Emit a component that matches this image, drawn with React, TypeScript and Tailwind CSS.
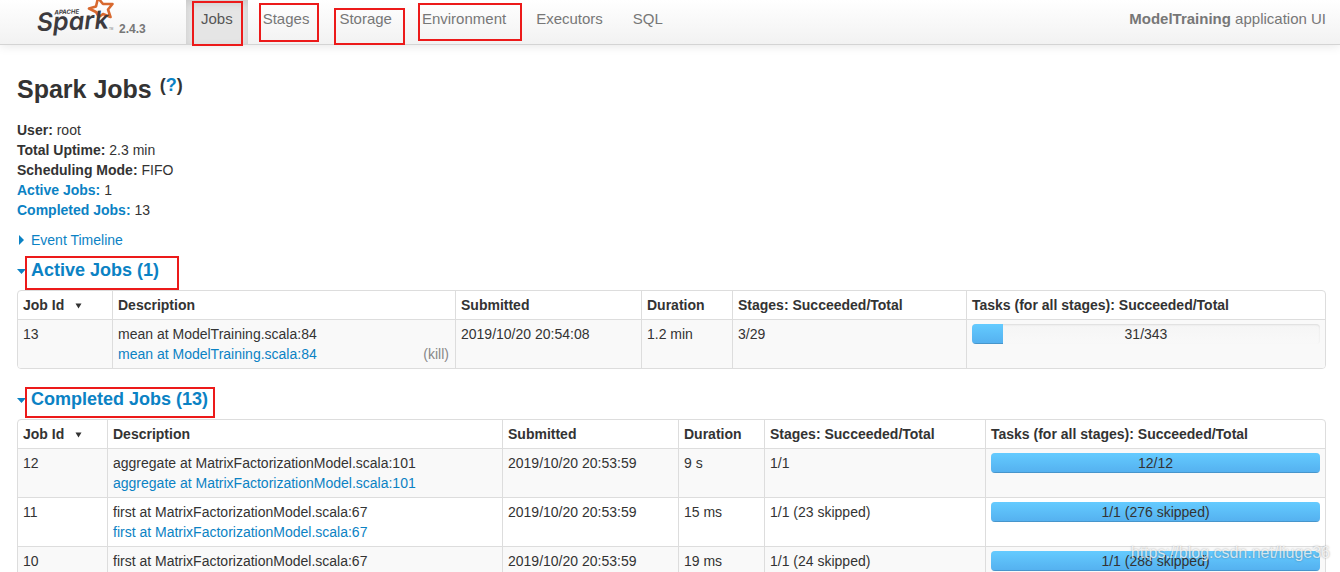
import React from "react";

type Job = {
  id: number;
  name: string;
  submitted: string;
  duration: string;
  stages: string;
  done: number;
  total: number;
  skipped?: number;
  running?: boolean;
};

const activeJobs: Job[] = [
  { id: 13, name: "mean at ModelTraining.scala:84", submitted: "2019/10/20 20:54:08", duration: "1.2 min", stages: "3/29", done: 31, total: 343, running: true },
];

const completedJobs: Job[] = [
  { id: 12, name: "aggregate at MatrixFactorizationModel.scala:101", submitted: "2019/10/20 20:53:59", duration: "9 s", stages: "1/1", done: 12, total: 12 },
  { id: 11, name: "first at MatrixFactorizationModel.scala:67", submitted: "2019/10/20 20:53:59", duration: "15 ms", stages: "1/1 (23 skipped)", done: 1, total: 1, skipped: 276 },
  { id: 10, name: "first at MatrixFactorizationModel.scala:67", submitted: "2019/10/20 20:53:59", duration: "19 ms", stages: "1/1 (24 skipped)", done: 1, total: 1, skipped: 288 },
];

// mark = red frame drawn over the tab
const tabs = [
  { name: "Jobs", active: true, mark: "left-[6px] top-px h-[45px] w-[51px]" },
  { name: "Stages", mark: "left-[11px] top-[3px] h-[39px] w-[60px]" },
  { name: "Storage", mark: "left-[10px] top-[8px] h-[37px] w-[71px]" },
  { name: "Environment", mark: "left-[11px] top-[3px] h-[38px] w-[104px]" },
  { name: "Executors" },
  { name: "SQL" },
];

const headers = ["Job Id", "Description", "Submitted", "Duration", "Stages: Succeeded/Total", "Tasks (for all stages): Succeeded/Total"];

const SparkLogo: React.FC = () => (
  <svg width="80" height="36" viewBox="0 0 80 36" aria-label="Apache Spark" className="block">
    <polygon
      points="53,8.500 60,6.500 62,-2 67,4 76.500,4 72,9.500 74.500,17 67,14 63,17 60,12"
      fill="none"
      stroke="#d8692f"
      strokeWidth="2.600"
      strokeLinejoin="round"
    />
    <g transform="rotate(-2 1 30)" fill="#3c3a3e" className="font-[Inter,sans-serif] italic">
      <text x="1" y="31" fontSize="25" fontWeight="600">Spark</text>
      <text x="19" y="15" fontSize="6" fontWeight="700">APACHE</text>
    </g>
    <text x="73" y="30" fontSize="3" fill="#777">TM</text>
  </svg>
);

type SectionTitleProps = {
  title: string;
  mark: string;
};

const SectionTitle: React.FC<SectionTitleProps> = ({ title, mark }) => (
  <h4 className="relative h-5 text-[18px] leading-5 font-bold text-[#0b82c4]">
    <a href="#" className="flex items-center gap-[5px]">
      <svg width="9" height="5" viewBox="0 0 9 5" className="mt-[3px]">
        <path d="M0 0h9L4.500 5z" fill="currentColor" />
      </svg>
      {title}
    </a>
    <span className={"pointer-events-none absolute border-2 border-[#ec1a1a] " + mark} />
  </h4>
);

const TaskProgress: React.FC<{ job: Job }> = ({ job }) => (
  <div className="relative h-5 overflow-hidden rounded-sm bg-linear-to-b from-[#f5f5f5] to-[#f9f9f9] text-center shadow-[inset_0_1px_2px_rgba(0,0,0,0.1)]">
    <div
      className="h-5 bg-linear-to-b from-[#64cbff] to-[#54b0ef] shadow-[inset_0_-1px_0_rgba(0,0,0,0.15)]"
      style={{ width: `${(job.done / job.total) * 100}%` }}
    />
    <span className="absolute inset-0">
      {job.done}/{job.total}
      {job.skipped ? ` (${job.skipped} skipped)` : ""}
    </span>
  </div>
);

type JobTableProps = {
  jobs: Job[];
  cols: string[];
};

const JobTable: React.FC<JobTableProps> = ({ jobs, cols }) => {
  const cell = "border-[#dddddd] px-[5px] py-1 not-first:border-l";

  return (
    <div className="overflow-hidden rounded border border-[#dddddd]">
      <table className="w-full table-fixed border-separate border-spacing-0 text-left">
        <colgroup>
          {cols.map((c, i) => (
            <col key={i} className={c} />
          ))}
        </colgroup>
        <thead>
          <tr>
            {headers.map((h, i) => (
              <th key={h} scope="col" className={cell + " font-bold whitespace-nowrap"}>
                {h}
                {i === 0 && (
                  <svg width="7" height="6" viewBox="0 0 7 6" className="ml-[11px] inline-block align-[1px]">
                    <path d="M0.500 0.500h6L3.500 5.500z" fill="#333" />
                  </svg>
                )}
              </th>
            ))}
          </tr>
        </thead>
        <tbody>
          {jobs.map((job) => (
            <tr key={job.id} className="align-top odd:bg-[#f9f9f9]">
              <td className={cell + " border-t"}>{job.id}</td>
              <td className={cell + " border-t"}>
                <div>{job.name}</div>
                <div className="flex justify-between">
                  <a href="#" className="text-[#0b82c4]">{job.name}</a>
                  {job.running && <a href="#" className="pr-px text-[#888888]">(kill)</a>}
                </div>
              </td>
              <td className={cell + " border-t"}>{job.submitted}</td>
              <td className={cell + " border-t"}>{job.duration}</td>
              <td className={cell + " border-t"}>{job.stages}</td>
              <td className={cell + " border-t"}>
                <TaskProgress job={job} />
              </td>
            </tr>
          ))}
        </tbody>
      </table>
    </div>
  );
};

const App: React.FC = () => {
  return (
    <div className="relative h-screen overflow-hidden bg-white font-['Liberation_Sans',Arial,sans-serif] text-sm leading-5 text-[#333333]">
      <nav className="flex h-[45px] border-b border-[#d4d4d4] bg-linear-to-b from-white to-[#f2f2f2] pr-[14px] pl-9 text-[15px] text-[#777777] shadow-[0_1px_10px_rgba(0,0,0,0.1)]">
        <a href="#" className="flex w-[150px] items-start gap-[3px]">
          <SparkLogo />
          <span className="pt-[19px] text-xs leading-5 font-bold">2.4.3</span>
        </a>
        <ul className="flex">
          {tabs.map((tab) => (
            <li key={tab.name} className="relative">
              <a
                href="#"
                className={
                  "block h-11 px-[15px] pt-[9px] " +
                  (tab.active ? "bg-[#e5e5e5] text-[#555555] shadow-[inset_0_3px_8px_rgba(0,0,0,0.125)]" : "")
                }
              >
                {tab.name}
              </a>
              {tab.mark && <span className={"pointer-events-none absolute border-2 border-[#ec1a1a] " + tab.mark} />}
            </li>
          ))}
        </ul>
        <p className="ml-auto pt-[9px]">
          <strong>ModelTraining</strong> application UI
        </p>
      </nav>

      <main className="pt-6 pr-[14px] pl-[17px]">
        <h3 className="flex h-10 gap-2 text-[25px] leading-10 font-bold">
          Spark Jobs
          <sup className="top-0 text-[18px] leading-8">
            (<a href="#" className="text-[#0b82c4]">?</a>)
          </sup>
        </h3>

        <ul className="mt-[11px]">
          <li><strong>User:</strong> root</li>
          <li><strong>Total Uptime:</strong> 2.3 min</li>
          <li><strong>Scheduling Mode:</strong> FIFO</li>
          <li><a href="#" className="font-bold text-[#0b82c4]">Active Jobs:</a> 1</li>
          <li><a href="#" className="font-bold text-[#0b82c4]">Completed Jobs:</a> 13</li>
        </ul>

        <a href="#" className="mt-[10px] mb-[10px] flex items-center gap-[7px] pl-[2px] text-[#0b82c4]">
          <svg width="5" height="10" viewBox="0 0 5 10">
            <path d="M0 0v10l5-5z" fill="currentColor" />
          </svg>
          Event Timeline
        </a>

        <SectionTitle title="Active Jobs (1)" mark="left-[8px] top-[-4px] h-[34px] w-[154px]" />
        <div className="mt-[10px] mb-5">
          <JobTable jobs={activeJobs} cols={["w-[94px]", "w-[343px]", "w-[186px]", "w-[91px]", "w-[234px]", ""]} />
        </div>

        <SectionTitle title="Completed Jobs (13)" mark="left-[8px] top-[-2px] h-[31px] w-[190px]" />
        <div className="mt-[10px]">
          <JobTable jobs={completedJobs} cols={["w-[89px]", "w-[395px]", "w-[176px]", "w-[86px]", "w-[221px]", ""]} />
        </div>
      </main>

      <span className="pointer-events-none absolute right-[10px] bottom-[9px] text-base leading-5 text-white/75 [text-shadow:0_0_2px_rgba(0,0,0,0.35)]">
        https://blog.csdn.net/liuge36
      </span>
    </div>
  );
};

export default App;
